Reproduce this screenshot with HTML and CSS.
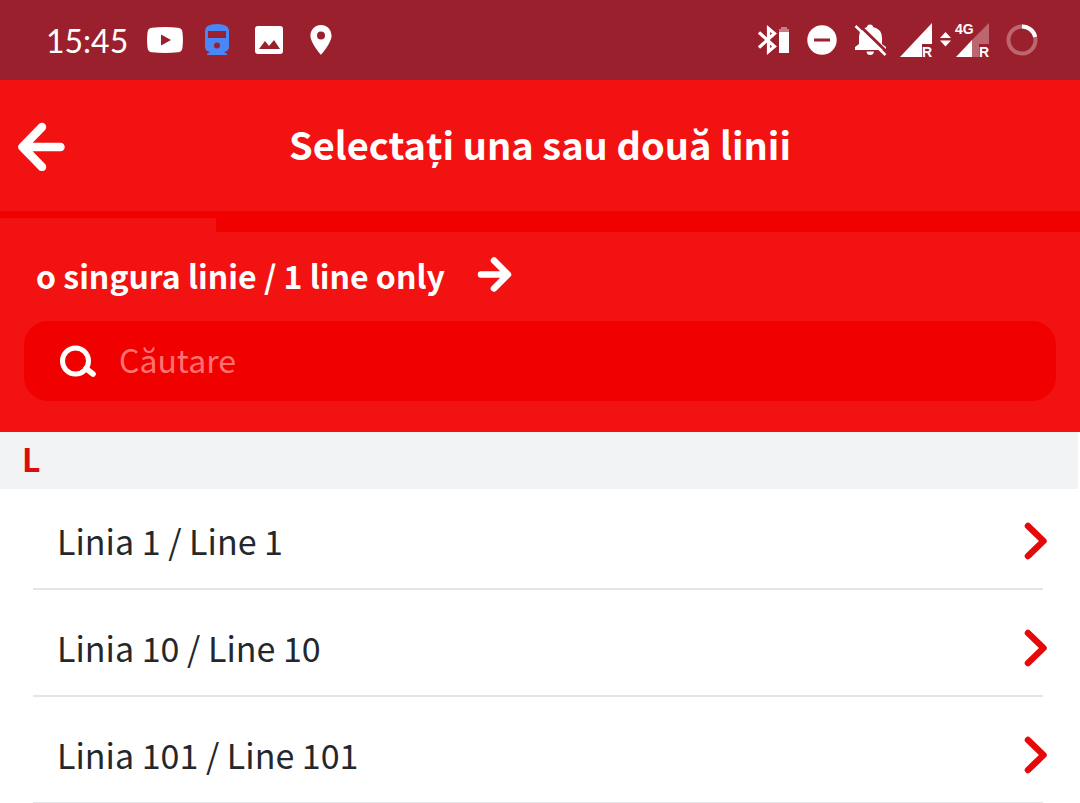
FILE: index.html
```html
<!DOCTYPE html>
<html lang="ro">
<head>
<meta charset="utf-8">
<meta name="viewport" content="width=device-width, initial-scale=1">
<title>Selectați una sau două linii</title>
<link rel="stylesheet" href="styles.css">
</head>
<body>
<div class="status">
  <div class="status-left">
    <span class="clock">15:45</span>
    <div class="notices">
      <svg width="36" height="26" viewBox="0 0 36 26"><path fill="#fff" d="M5 .7Q18-.5 31 .7Q35 1 35.400 5Q36.500 13 35.400 21Q35 25 31 25.300Q18 26.500 5 25.300Q1 25 .6 21Q-.5 13 .6 5Q1 1 5 .7Z"/><path fill="#9a202d" d="M14 7.500v11l10-5.500z"/></svg>
      <svg width="36" height="32" viewBox="-5 0 36 32"><path fill="#4b86f7" fill-rule="evenodd" d="M1 7Q1 0 13 0T25 7V23Q25 27 20 28L23 30V31H3V30L6 28Q1 27 1 23ZM4 7V14H22V7ZM13 18.500a3 3 0 1 0 0 6a3 3 0 1 0 0-6Z"/></svg>
      <svg width="36" height="28" viewBox="-4 0 36 28"><rect width="28" height="28" rx="3" fill="#fff"/><path fill="#9a202d" d="M4 23l6-8 4 5 5-6 6 9z"/></svg>
      <svg width="36" height="30" viewBox="-7 0 36 30"><path fill="#fff" fill-rule="evenodd" d="M11 0A10.600 10.600 0 0 0 .4 10.600C.4 18 11 30 11 30S21.600 18 21.600 10.600A10.600 10.600 0 0 0 11 0ZM11 6.500a4 4 0 1 1 0 8a4 4 0 1 1 0-8Z"/></svg>
    </div>
  </div>
  <div class="status-right">
    <div class="alerts">
      <svg width="32" height="32" viewBox="0 0 32 32"><path d="M1 8.500L16.500 22.500L10.500 27.500V4.500L16.500 9.500L1 23.500" fill="none" stroke="#fff" stroke-width="3.200"/><path fill="#c27f86" d="M23 3h6v2h2v3H21V5h2z"/><path fill="#fff" d="M21 8h10v21H21z"/></svg>
      <svg width="30" height="30" viewBox="0 0 30 30"><circle cx="15" cy="15" r="14.700" fill="#fff"/><path fill="#9a202d" d="M7 13.500h16v3H7z"/></svg>
      <svg width="34" height="32" viewBox="0 0 34 32"><path fill="#fff" d="M1 26V23L5 20V13Q5 5 13 3Q13 .5 16 .5T19 3Q28 5 28 14V20L32 23V26ZM12.500 27.500H20Q19.500 31 16.200 31T12.500 27.500Z"/><path stroke="#9a202d" stroke-width="3" d="M4 0L34 29"/><path stroke="#fff" stroke-width="2.500" d="M1.500 2L31.500 31"/></svg>
    </div>
    <div class="signals">
      <svg width="34" height="42" viewBox="0 -3 34 42"><path fill="#fff" d="M1 35L33 1V22H23V35Z"/><text class="tag" x="23" y="35">R</text></svg>
      <svg width="50" height="42" viewBox="0 -3 50 42"><path fill="#fff" d="M0 16L5.500 10L11 16ZM0 18.500H11L5.500 24.500Z"/><path fill="#bd6670" d="M32 18L49 1V22H39V35H32Z"/><path fill="#fff" d="M16 35L32 18V35Z"/><text class="tag" x="39" y="35">R</text><text class="tag" x="15" y="12">4G</text></svg>
    </div>
    <svg width="32" height="32" viewBox="0 0 32 32"><circle cx="16" cy="16" r="13.500" fill="none" stroke="#bd6670" stroke-width="4"/><path d="M16 2.500A13.500 13.500 0 0 1 29.200 13" fill="none" stroke="#fff" stroke-width="4"/></svg>
  </div>
</div>
<header class="top">
  <button class="back" type="button" aria-label="Înapoi"><svg width="48" height="50" viewBox="0 0 48 50"><path d="M24 6L4.500 26L24 46M6 26H42.500" fill="none" stroke="#fff" stroke-width="8.500" stroke-linecap="round" stroke-linejoin="round"/></svg></button>
  <h1 class="title">Selectați una sau două linii</h1>
</header>
<div class="steps"><div class="step-done"></div></div>
<section class="filter">
  <button class="only" type="button">o singura linie / 1 line only
    <svg width="36" height="36" viewBox="0 0 36 36"><path d="M17 3.500L31 17.500L17 31.500M4 17.500H30" fill="none" stroke="#fff" stroke-width="6.500" stroke-linecap="round" stroke-linejoin="round"/></svg></button>
  <label class="search">
    <svg width="36" height="32" viewBox="0 0 36 32"><circle cx="15.500" cy="16" r="13" fill="none" stroke="#fff" stroke-width="5"/><path d="M26 23.500L33 29" stroke="#fff" stroke-width="5.500" stroke-linecap="round"/></svg>
    <input class="search-input" type="search" placeholder="Căutare" aria-label="Căutare">
  </label>
</section>
<main>
  <h2 class="group">L</h2>
  <ul class="lines">
    <li class="line"><a class="line-link" href="#1">Linia 1 / Line 1 <svg width="24" height="38" viewBox="0 0 24 38"><path d="M4 4L19.500 19L4 34" fill="none" stroke="#e60909" stroke-width="6.500" stroke-linecap="round" stroke-linejoin="round"/></svg></a></li>
    <li class="line"><a class="line-link" href="#10">Linia 10 / Line 10 <svg width="24" height="38" viewBox="0 0 24 38"><path d="M4 4L19.500 19L4 34" fill="none" stroke="#e60909" stroke-width="6.500" stroke-linecap="round" stroke-linejoin="round"/></svg></a></li>
    <li class="line"><a class="line-link" href="#101">Linia 101 / Line 101 <svg width="24" height="38" viewBox="0 0 24 38"><path d="M4 4L19.500 19L4 34" fill="none" stroke="#e60909" stroke-width="6.500" stroke-linecap="round" stroke-linejoin="round"/></svg></a></li>
  </ul>
</main>
</body>
</html>
```
FILE: styles.css
```css
* { box-sizing: border-box; }
html { overflow-x: hidden; scrollbar-width: none; }
body {
  margin: 0;
  background: #fff;
  color: #24282c;
  font-family: "Noto Sans CJK SC", "Noto Sans", sans-serif;
  font-size: 34px;
  line-height: 48px;
}
svg { display: block; flex: none; }
button {
  border: 0;
  padding: 0;
  background: none;
  color: inherit;
  font: inherit;
}
.status {
  display: flex;
  justify-content: space-between;
  align-items: center;
  height: 80px;
  padding: 0 42px 0 46px;
  background: #9a202d;
  color: #fff;
}
.status-left, .status-right, .notices, .alerts, .signals {
  display: flex;
  align-items: center;
}
.status-left { gap: 19px; }
.notices { gap: 16px; }
.alerts { gap: 17px; margin-right: 11px; }
.signals { gap: 7px; margin-right: 16px; }
.clock { padding-top: 2px; font-family: Lato, sans-serif; font-size: 32px; }
.tag { fill: #fff; font: bold 14px "Liberation Sans", sans-serif; }
.top {
  display: grid;
  grid-template-columns: 48px 1fr 48px;
  align-items: center;
  height: 131px;
  padding: 0 18px;
  background: #f31212;
  color: #fff;
}
.title {
  margin: 0;
  padding-bottom: 4px;
  text-align: center;
  font-size: 38px;
  font-weight: 700;
}
.steps { height: 21px; padding-top: 7px; background: #f10000; }
.step-done { width: 20%; height: 14px; background: #f31212; }
.filter { padding: 19px 24px 31px; background: #f31212; color: #fff; }
.only {
  display: flex;
  align-items: center;
  gap: 32px;
  margin: 0 0 22px 12px;
  font-size: 32px;
  font-weight: 700;
}
.search {
  display: flex;
  align-items: center;
  gap: 23px;
  height: 80px;
  padding: 0 36px;
  border-radius: 24px;
  background: #f10000;
}
.search-input {
  flex: 1;
  min-width: 0;
  border: 0;
  padding: 0 0 4px;
  outline: 0;
  background: none;
  color: #fff;
  font: inherit;
  font-size: 32px;
}
.search-input::placeholder { color: #ff7272; opacity: 1; }
.group {
  height: 57px;
  margin: 0 2px 0 0;
  padding: 2px 22px;
  background: #f2f3f5;
  color: #dc0d0d;
  font-size: 32px;
  font-weight: 700;
}
.lines {
  display: grid;
  gap: 6px;
  margin: 0;
  padding: 0 37px 0 33px;
  list-style: none;
}
.line { height: 101px; border-bottom: 2px solid #e4e5e6; }
.line-link {
  display: flex;
  justify-content: space-between;
  align-items: center;
  height: 100%;
  margin-right: -5px;
  padding: 4px 0 0 24px;
  color: inherit;
  text-decoration: none;
}
```
